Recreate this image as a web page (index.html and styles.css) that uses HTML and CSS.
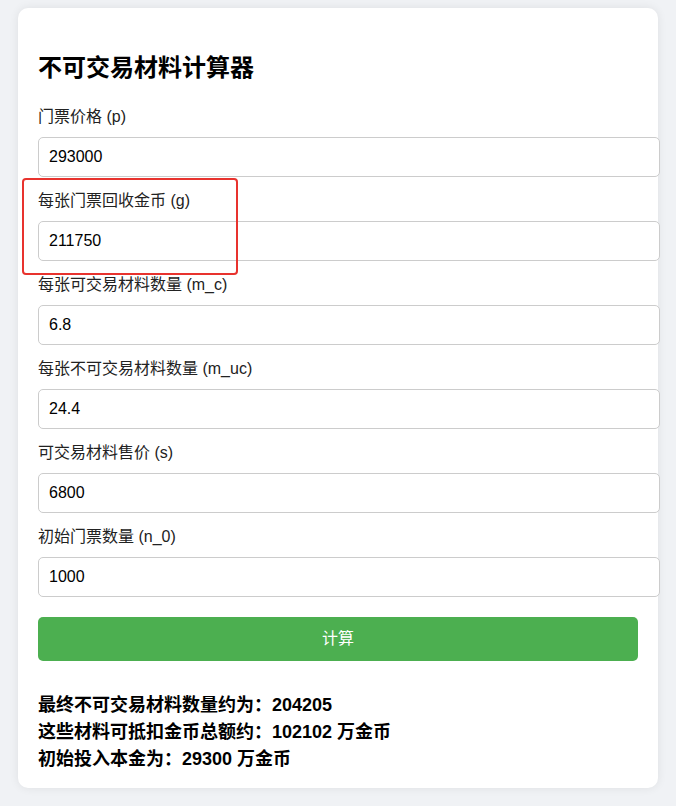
FILE: index.html
```html
<!DOCTYPE html>
<html lang="zh-CN">
<head>
<meta charset="utf-8">
<title>不可交易材料计算器</title>
<link rel="stylesheet" href="styles.css">
</head>
<body>
<div class="card">
  <h2 class="title">不可交易材料计算器</h2>
  <div class="group">
    <label class="label" for="p">门票价格 (p)</label>
    <input class="field" id="p" type="text" value="293000">
  </div>
  <div class="group highlighted">
    <label class="label" for="g">每张门票回收金币 (g)</label>
    <input class="field" id="g" type="text" value="211750">
    <div class="mark"></div>
  </div>
  <div class="group">
    <label class="label" for="mc">每张可交易材料数量 (m_c)</label>
    <input class="field" id="mc" type="text" value="6.8">
  </div>
  <div class="group">
    <label class="label" for="muc">每张不可交易材料数量 (m_uc)</label>
    <input class="field" id="muc" type="text" value="24.4">
  </div>
  <div class="group">
    <label class="label" for="s">可交易材料售价 (s)</label>
    <input class="field" id="s" type="text" value="6800">
  </div>
  <div class="group">
    <label class="label" for="n0">初始门票数量 (n_0)</label>
    <input class="field" id="n0" type="text" value="1000">
  </div>
  <button class="btn" type="button">计算</button>
  <div class="result">
    <div>最终不可交易材料数量约为：204205</div>
    <div>这些材料可抵扣金币总额约：102102 万金币</div>
    <div>初始投入本金为：29300 万金币</div>
  </div>
</div>
</body>
</html>
```
FILE: styles.css
```css
html, body {
  margin: 0;
  padding: 0;
}
body {
  background: #f0f2f5;
  padding: 8px;
  font-family: "Liberation Sans", Arial, "Noto Sans CJK SC", sans-serif;
  color: #000;
}
.card {
  position: relative;
  max-width: 600px;
  margin: 0 auto;
  padding: 20px 20px 15px;
  background: #fff;
  border-radius: 10px;
  box-shadow: 0 0 10px rgba(0, 0, 0, 0.08);
}
.title {
  margin: 24px 0 22px;
  font-size: 24px;
  line-height: 31px;
  font-weight: bold;
}
.group {
  position: relative;
  margin-bottom: 12px;
}
.label {
  display: block;
  font-size: 16px;
  line-height: 24px;
  margin-bottom: 8px;
  color: #222;
}
.field {
  display: block;
  width: 100%;
  padding: 10px;
  margin: 0;
  border: 1px solid #ccc;
  border-radius: 5px;
  font-family: "Liberation Sans", Arial, "Noto Sans CJK SC", sans-serif;
  font-size: 16px;
  line-height: 18px;
  height: 18px;
  color: #000;
  background: #fff;
  outline: none;
}
.mark {
  position: absolute;
  left: -16px;
  top: -11px;
  width: 212px;
  height: 93px;
  border: 2px solid #e8332e;
  border-radius: 4px;
  pointer-events: none;
}
.btn {
  display: block;
  width: 100%;
  margin-top: 20px;
  padding: 12px 0;
  border: none;
  border-radius: 5px;
  background: #4caf50;
  color: #fff;
  font-family: "Liberation Sans", Arial, "Noto Sans CJK SC", sans-serif;
  font-size: 16px;
  line-height: 20px;
  cursor: pointer;
}
.result {
  margin-top: 31px;
  font-size: 18px;
  line-height: 27px;
  font-weight: bold;
}
```
